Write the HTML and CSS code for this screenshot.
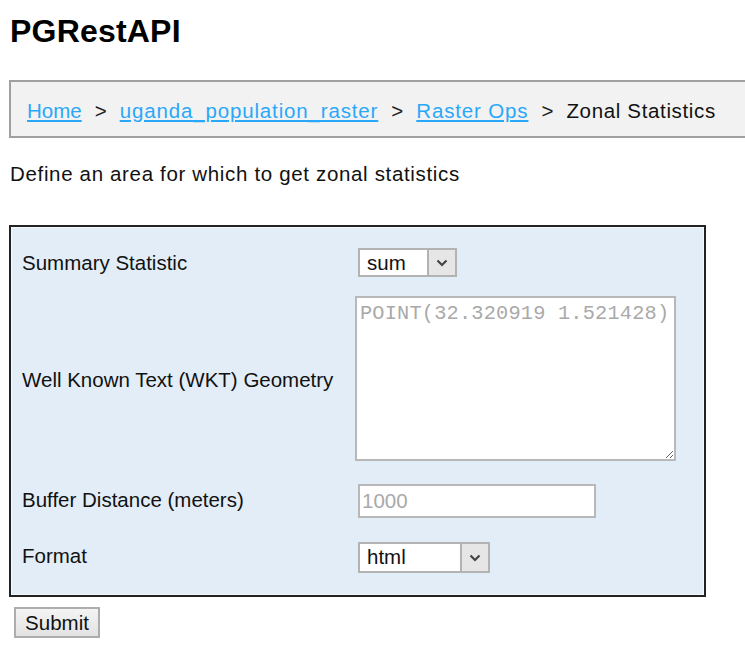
FILE: index.html
```html
<!DOCTYPE html>
<html>
<head>
<meta charset="utf-8">
<title>PGRestAPI</title>
<link rel="stylesheet" href="styles.css">
</head>
<body>
<h1 class="title">PGRestAPI</h1>
<nav class="crumbs">
  <a class="home" href="#">Home</a><span class="sep">&gt;</span><a class="wide" href="#">uganda_population_raster</a><span class="sep">&gt;</span><a class="wide" href="#">Raster Ops</a><span class="sep">&gt;</span><span class="current">Zonal Statistics</span>
</nav>
<p class="intro">Define an area for which to get zonal statistics</p>
<form class="panel">
  <div class="grid">
    <label class="lbl">Summary Statistic</label>
    <div class="select sel-small">
      <span class="value">sum</span>
      <span class="arrow"><svg width="12" height="8" viewBox="0 0 12 8"><path d="M1.5 1.5 L6 6 L10.5 1.5" fill="none" stroke="#444" stroke-width="2.2"/></svg></span>
    </div>
    <label class="lbl">Well Known Text (WKT) Geometry</label>
    <textarea class="wkt" placeholder="POINT(32.320919 1.521428)"></textarea>
    <label class="lbl">Buffer Distance (meters)</label>
    <input class="text" type="text" placeholder="1000">
    <label class="lbl">Format</label>
    <div class="select sel-wide">
      <span class="value">html</span>
      <span class="arrow"><svg width="12" height="8" viewBox="0 0 12 8"><path d="M1.5 1.5 L6 6 L10.5 1.5" fill="none" stroke="#444" stroke-width="2.2"/></svg></span>
    </div>
  </div>
</form>
<button class="submit" type="button">Submit</button>
</body>
</html>
```
FILE: styles.css
```css
html, body {
  margin: 0;
  padding: 0;
  background: #ffffff;
  overflow: hidden;
}
body {
  padding: 0 9px;
  font-family: "Liberation Sans", Arial, sans-serif;
  font-size: 20.5px;
  color: #111;
}
.title {
  margin: 13px 0 0 1px;
  font-size: 32px;
  line-height: 36px;
  font-weight: bold;
  letter-spacing: 0.2px;
  color: #000;
}
.crumbs {
  margin-top: 31px;
  width: 760px;
  box-sizing: border-box;
  height: 58px;
  border: 2px solid #a0a0a0;
  background: #f2f2f2;
  padding: 3px 16px 0 16px;
  display: flex;
  align-items: center;
  line-height: 24px;
  white-space: nowrap;
}
.crumbs a {
  color: #2aa8f8;
  text-decoration: underline;
}
.crumbs .wide {
  letter-spacing: 0.85px;
}
.sep {
  padding: 0 13px 0 13px;
  color: #222;
}
.current {
  color: #111;
  letter-spacing: 0.65px;
}
.intro {
  margin: 24px 0 0 1px;
  line-height: 24px;
  letter-spacing: 0.66px;
}
.panel {
  margin-top: 39px;
  width: 697px;
  box-sizing: border-box;
  border: 2px solid #222;
  box-shadow: inset 0 0 0 1px #f6f9fc;
  background: #e3edf7;
  padding: 21px 11px 22px 11px;
}
.grid {
  display: grid;
  grid-template-columns: 333px 1fr;
  row-gap: 21px;
  align-items: center;
  justify-items: start;
}
.lbl {
  line-height: 24px;
}
.select {
  margin-left: 3px;
  display: flex;
  box-sizing: border-box;
  border: 2px solid #b3b3b3;
  background: #fff;
}
.sel-small {
  width: 99px;
  height: 29px;
}
.sel-wide {
  width: 132px;
  height: 31px;
  margin-top: 3px;
}
.select .value {
  flex: 1;
  padding-left: 7px;
  line-height: 25px;
  color: #111;
}
.select .arrow {
  width: 26px;
  background: #e6e6e6;
  border-left: 2px solid #b3b3b3;
  display: flex;
  align-items: center;
  justify-content: center;
}
.wkt {
  width: 321px;
  height: 165px;
  box-sizing: border-box;
  border: 2px solid #b8b8b8;
  background: #fff;
  padding: 4px 3px;
  margin: -2px 0 0 0;
  font-family: "Liberation Mono", "Courier New", monospace;
  font-size: 20.3px;
  letter-spacing: 0.2px;
  line-height: 24px;
  resize: both;
}
.wkt::placeholder {
  color: #a9a9a9;
}
.text {
  margin: 2px 0 0 3px;
  width: 238px;
  height: 34px;
  box-sizing: border-box;
  border: 2px solid #b8b8b8;
  background: #fff;
  padding: 0 2px;
  font-family: "Liberation Sans", Arial, sans-serif;
  font-size: 20.5px;
}
.text::placeholder {
  color: #a9a9a9;
}
.submit {
  margin: 10px 0 0 5px;
  width: 86px;
  height: 31px;
  box-sizing: border-box;
  border: 2px solid #adadad;
  background: linear-gradient(#f4f4f4, #e2e2e2);
  font-family: "Liberation Sans", Arial, sans-serif;
  font-size: 20.5px;
  color: #111;
  padding: 0;
}
```
